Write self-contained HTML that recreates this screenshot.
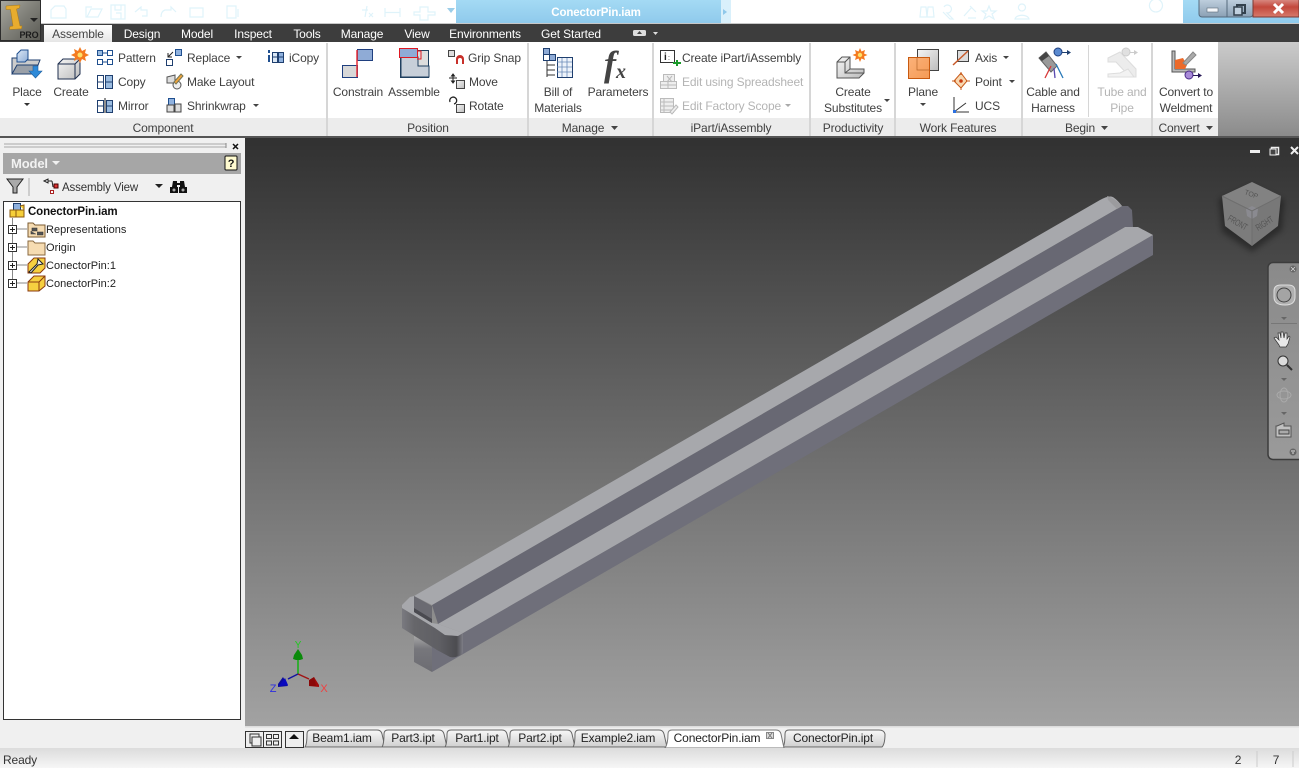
<!DOCTYPE html>
<html><head><meta charset="utf-8"><title>ConectorPin.iam</title>
<style>
html,body{margin:0;padding:0;width:1299px;height:768px;overflow:hidden;background:#f0f0f0}
svg{position:absolute;left:0;top:0;display:block}
text{font-family:"Liberation Sans",sans-serif;font-size:12px;fill:#444;letter-spacing:-.13px}
.m{text-anchor:middle}
.w{fill:#fff}
.g{fill:#404040}
.d{fill:#b4b4b4}
.k{fill:#222}
.tr{font-size:11px;fill:#222;letter-spacing:.02px}
</style></head><body>
<svg width="1299" height="768" viewBox="0 0 1299 768" xmlns="http://www.w3.org/2000/svg">
<defs>
<linearGradient id="vp" x1="0" y1="0" x2="0" y2="1"><stop offset="0" stop-color="#313131"/><stop offset="1" stop-color="#a2a2a2"/></linearGradient>
<linearGradient id="blue" x1="0" y1="0" x2="0" y2="1"><stop offset="0" stop-color="#a4daf4"/><stop offset="1" stop-color="#8fcaec"/></linearGradient>
<linearGradient id="app" x1="0" y1="0" x2="1" y2="1"><stop offset="0" stop-color="#a8a8a0"/><stop offset=".5" stop-color="#7f7f78"/><stop offset="1" stop-color="#5a5a54"/></linearGradient>
<linearGradient id="rgt" x1="0" y1="0" x2="0" y2="1"><stop offset="0" stop-color="#cbcbcb"/><stop offset="1" stop-color="#8b8b8b"/></linearGradient>
<linearGradient id="tab" x1="0" y1="0" x2="0" y2="1"><stop offset="0" stop-color="#f8f8f8"/><stop offset="1" stop-color="#cfcfcf"/></linearGradient>
<linearGradient id="asm" x1="0" y1="0" x2="0" y2="1"><stop offset="0" stop-color="#fff"/><stop offset="1" stop-color="#e4e4e4"/></linearGradient>
<linearGradient id="st" x1="0" y1="0" x2="0" y2="1"><stop offset="0" stop-color="#dcdcdc"/><stop offset="1" stop-color="#f6f6f6"/></linearGradient>
<linearGradient id="btn" x1="0" y1="0" x2="0" y2="1"><stop offset="0" stop-color="#c6d6e4"/><stop offset="1" stop-color="#8aa0b4"/></linearGradient>
<linearGradient id="red" x1="0" y1="0" x2="0" y2="1"><stop offset="0" stop-color="#e0a19a"/><stop offset=".5" stop-color="#c3483c"/><stop offset="1" stop-color="#d77a6c"/></linearGradient>
<linearGradient id="fl" x1="402" y1="0" x2="464" y2="0" gradientUnits="userSpaceOnUse"><stop offset="0" stop-color="#7a7a80"/><stop offset=".2" stop-color="#66666a"/><stop offset=".6" stop-color="#5f5f64"/><stop offset=".88" stop-color="#4c4c50"/><stop offset="1" stop-color="#85858f"/></linearGradient>
<linearGradient id="lo" x1="0" y1="636" x2="0" y2="672" gradientUnits="userSpaceOnUse"><stop offset="0" stop-color="#a8a8a8"/><stop offset=".35" stop-color="#77777c"/><stop offset="1" stop-color="#6c6c72"/></linearGradient>
<linearGradient id="nav" x1="0" y1="0" x2="0" y2="1"><stop offset="0" stop-color="#8a8a8a"/><stop offset="1" stop-color="#9a9a9a"/></linearGradient>
<linearGradient id="cb" x1="0" y1="0" x2="1" y2="1"><stop offset="0" stop-color="#dbe7f5"/><stop offset="1" stop-color="#8faed6"/></linearGradient>
<linearGradient id="gr" x1="0" y1="0" x2="1" y2="1"><stop offset="0" stop-color="#f5f5f5"/><stop offset="1" stop-color="#bcbcbc"/></linearGradient>
<linearGradient id="or" x1="0" y1="0" x2="1" y2="1"><stop offset="0" stop-color="#fbb27a"/><stop offset="1" stop-color="#f59a55"/></linearGradient>
<filter id="soft" x="-20%" y="-20%" width="140%" height="140%"><feGaussianBlur stdDeviation="3"/></filter>
</defs>

<!-- title bar -->
<rect width="1299" height="24" fill="#fff"/>
<rect x="456" y="0" width="265" height="23" fill="url(#blue)"/>
<rect x="721" y="0" width="10" height="23" fill="#d9f0fb"/>
<rect x="1183" y="0" width="116" height="24" fill="url(#blue)"/>
<text x="596" y="16" class="m w" style="font-weight:bold;font-size:11.500px">ConectorPin.iam</text>
<path d="M723 9l4 3-4 3z" fill="#8fc8ea"/>
<g fill="none" stroke="#dff3fa" stroke-width="1.200">
<path d="M51 18V10l4-4h9l2 3v9zM87 17l4-8h11l-4 8H86V7h6M111 5h14v14h-14zM115 5v5h6V5M116 13h5v6M135 12l6-5v3h6v6h-5M176 12l-5-5v3h-6c-3 1-4 4-4 7M190 8h13v9h-13zM227 6h9v12h-9zM238 9v8"/>
<path d="M367 6l-2 11M362 10h6M369 13l4 4M373 13l-4 4"/>
<path d="M385 8v9M385 12.500h15M400 8v9M420 7h8v5h7v3h-7v5h-8v-5h-6v-3h6z"/>
<path d="M921 7h5l1 10h-7zM928 7h5l1 10h-7zM944 7a4 4 0 1 1 3 6l6 6h-3l-7-7M970 6l6 6M964 16l8-9M968 18h8M989 6l2 5h5l-4 3 2 5-5-3-5 3 2-5-4-3h5zM1022 11a3.500 3.500 0 1 0-.1 0M1015 19c1-5 13-5 14 0zM1156 12a6.500 6.500 0 1 0-.1 0"/>
</g>
<path d="M447 8h8l-4 5z" fill="#9ccde8"/>
<!-- window buttons -->
<rect x="1199" y="-3" width="54" height="20" rx="3" fill="url(#btn)" stroke="#556a7c"/>
<path d="M1227 0v17" stroke="#556a7c"/>
<rect x="1253" y="-3" width="46" height="20" fill="url(#red)" stroke="#7a3a34"/>
<rect x="1207" y="8" width="11" height="4" fill="#f4f7fa" stroke="#5a6a78" stroke-width=".6"/>
<rect x="1237" y="5" width="8" height="8" fill="none" stroke="#33414d" stroke-width="2"/>
<rect x="1234" y="7" width="8" height="8" fill="#c0d0de" stroke="#33414d" stroke-width="1.500"/>
<path d="M1274 4l9 9M1283 4l-9 9" stroke="#fff" stroke-width="3"/>

<!-- tab bar -->
<rect y="23" width="1299" height="1" fill="#c8c8c8"/>
<rect y="24" width="1299" height="18" fill="#3d3d3d"/>
<rect x="44" y="25" width="68" height="18" fill="url(#asm)"/>
<text x="78" y="38" class="m">Assemble</text>
<text x="142" y="38" class="m w">Design</text>
<text x="197" y="38" class="m w">Model</text>
<text x="253" y="38" class="m w">Inspect</text>
<text x="307" y="38" class="m w">Tools</text>
<text x="362" y="38" class="m w">Manage</text>
<text x="417" y="38" class="m w">View</text>
<text x="485" y="38" class="m w">Environments</text>
<text x="571" y="38" class="m w">Get Started</text>
<rect x="633" y="30" width="13" height="6" rx="1.500" fill="#ddd"/><path d="M637 34l2.500-3 2.500 3z" fill="#444"/>
<path d="M653 32h5l-2.500 3z" fill="#ddd"/>

<!-- app button -->
<rect x=".5" y=".5" width="40" height="40" fill="url(#app)" stroke="#2c2c2c"/>
<path d="M6 6l14-1-.5 3-3 1L20 26l2-.2-.5 3L9.500 29.500l.5-3 3-.5L10.500 9.500 6 9.500z" fill="#e8ac2e" stroke="#a87a16" stroke-width=".5"/>
<path d="M30 18h8l-4 4z" fill="#222"/>
<text x="29" y="38" class="m" style="font-size:9px;font-weight:bold;fill:#1c1c1c">PRO</text>

<!-- ribbon -->
<rect y="42" width="1218" height="94" fill="#fff"/>
<rect x="1218" y="42" width="81" height="94" fill="url(#rgt)"/>
<rect y="118" width="1218" height="18" fill="#ececec"/>
<rect y="136" width="1299" height="2" fill="#555"/>
<g fill="#d6d6d6">
<rect x="326" y="43" width="2" height="93"/><rect x="527" y="43" width="2" height="93"/><rect x="652" y="43" width="2" height="93"/><rect x="809" y="43" width="2" height="93"/><rect x="894" y="43" width="2" height="93"/><rect x="1021" y="43" width="2" height="93"/><rect x="1151" y="43" width="2" height="93"/><rect x="1088" y="45" width="1" height="72"/>
</g>
<!-- ribbon labels -->
<text x="27" y="96" class="m g">Place</text><path d="M24 103h6l-3 3z" fill="#333"/>
<text x="71" y="96" class="m g">Create</text>
<text x="118" y="62" class="g">Pattern</text>
<text x="118" y="86" class="g">Copy</text>
<text x="118" y="110" class="g">Mirror</text>
<text x="187" y="62" class="g">Replace</text><path d="M236 56h6l-3 3z" fill="#444"/>
<text x="187" y="86" class="g">Make Layout</text>
<text x="187" y="110" class="g">Shrinkwrap</text><path d="M253 104h6l-3 3z" fill="#444"/>
<text x="289" y="62" class="g">iCopy</text>
<text x="163" y="132" class="m g">Component</text>
<text x="358" y="96" class="m g">Constrain</text>
<text x="414" y="96" class="m g">Assemble</text>
<text x="468" y="62" class="g">Grip Snap</text>
<text x="469" y="86" class="g">Move</text>
<text x="469" y="110" class="g">Rotate</text>
<text x="428" y="132" class="m g">Position</text>
<text x="558" y="96" class="m g">Bill of</text>
<text x="558" y="112" class="m g">Materials</text>
<text x="618" y="96" class="m g">Parameters</text>
<text x="583" y="132" class="m g">Manage</text><path d="M611 126h7l-3.500 4z" fill="#444"/>
<text x="682" y="62" class="g">Create iPart/iAssembly</text>
<text x="682" y="86" class="d">Edit using Spreadsheet</text>
<text x="682" y="110" class="d">Edit Factory Scope</text><path d="M785 104h6l-3 3z" fill="#aaa"/>
<text x="731" y="132" class="m g">iPart/iAssembly</text>
<text x="853" y="96" class="m g">Create</text>
<text x="853" y="112" class="m g">Substitutes</text><path d="M884 99h6l-3 3z" fill="#444"/>
<text x="853" y="132" class="m g">Productivity</text>
<text x="923" y="96" class="m g">Plane</text><path d="M920 103h6l-3 3z" fill="#444"/>
<text x="975" y="62" class="g">Axis</text><path d="M1003 56h6l-3 3z" fill="#444"/>
<text x="975" y="86" class="g">Point</text><path d="M1009 80h6l-3 3z" fill="#444"/>
<text x="975" y="110" class="g">UCS</text>
<text x="958" y="132" class="m g">Work Features</text>
<text x="1053" y="96" class="m g">Cable and</text>
<text x="1053" y="112" class="m g">Harness</text>
<text x="1122" y="96" class="m d">Tube and</text>
<text x="1122" y="112" class="m d">Pipe</text>
<text x="1080" y="132" class="m g">Begin</text><path d="M1101 126h7l-3.500 4z" fill="#444"/>
<text x="1186" y="96" class="m g">Convert to</text>
<text x="1186" y="112" class="m g">Weldment</text>
<text x="1179" y="132" class="m g">Convert</text><path d="M1206 126h7l-3.500 4z" fill="#444"/>

<!-- ribbon icons -->
<!-- Place -->
<path d="M12 73V58h6v-1h9v3h13l-2 5H22l-6 8z" fill="#ccc" stroke="#1f3f6f"/>
<path d="M12 74l5-9h21l-4 9z" fill="#9aa0a8" stroke="#1f3f6f"/>
<path d="M17 54l4-4h7v9l-3 3h-8z" fill="url(#cb)" stroke="#1f4f8f"/>
<path d="M33 66h5v5h4l-6.500 7-6.500-7h4z" fill="#2e8ad8" stroke="#1f5f9f" stroke-width=".6"/>
<!-- Create -->
<path d="M58 64l5-5h17v15l-5 5H58z" fill="url(#gr)" stroke="#1f2f4f"/>
<path d="M58 64h17v15M75 64l5-5" fill="none" stroke="#1f2f4f"/>
<path d="M80 47l2 4 4-2-1 4 4 2-4 2 1 4-4-2-2 4-2-4-4 2 1-4-4-2 4-2-1-4 4 2z" fill="#f47a20"/><circle cx="80" cy="55" r="2.500" fill="#ffe066"/>
<!-- Pattern -->
<g fill="#fff" stroke="#1f4f8f"><rect x="97.500" y="50.500" width="5" height="5" fill="#9bbce0"/><rect x="107.500" y="50.500" width="5" height="5"/><rect x="97.500" y="59.500" width="5" height="5"/><rect x="107.500" y="59.500" width="5" height="5"/></g>
<path d="M103 53h4M103 62h4" stroke="#1f4f8f"/>
<!-- Copy -->
<g fill="#fff" stroke="#1f3f6f"><rect x="97.500" y="75.500" width="6" height="13"/><rect x="105.500" y="75.500" width="7" height="13" fill="#9bbce0"/></g><path d="M97 82h6M105 82h7" stroke="#1f3f6f"/>
<!-- Mirror -->
<g fill="#fff" stroke="#1f3f6f"><rect x="97.500" y="100.500" width="6" height="12"/><rect x="106.500" y="100.500" width="6" height="12" fill="#9bbce0"/></g><path d="M97 106h6M106 106h6" stroke="#1f3f6f"/><path d="M105 98v15" stroke="#222"/>
<!-- Replace -->
<rect x="175.500" y="49.500" width="6" height="6" fill="#8fb1de" stroke="#1f4f8f"/><rect x="166.500" y="59.500" width="6" height="6" fill="#fff" stroke="#1f3f6f"/><path d="M168 57l5-5M168 53v4h4" fill="none" stroke="#222"/>
<!-- Make Layout -->
<path d="M167 77l8-2v8h-8z" fill="#ddd" stroke="#555"/><circle cx="177" cy="85" r="4" fill="#eee" stroke="#555"/><path d="M174 82l7-8 2 2-7 8z" fill="#f2a33a" stroke="#775"/>
<!-- Shrinkwrap -->
<rect x="168.500" y="98.500" width="6" height="7" fill="#8fb1de" stroke="#1f4f8f"/><path d="M167 105h7v7h-7zM175 104h6v8h-6z" fill="#ddd" stroke="#444"/>
<!-- iCopy -->
<path d="M269 50v3M269 55v7" stroke="#1f4f8f" stroke-width="2"/><rect x="272.500" y="52.500" width="5" height="10" fill="#dce8f5" stroke="#1f3f6f"/><rect x="278.500" y="52.500" width="5" height="10" fill="#8fb1de" stroke="#1f3f6f"/><path d="M272 57h11" stroke="#1f3f6f"/>
<!-- Constrain -->
<rect x="357.500" y="49.500" width="15" height="11" fill="#8fabd6" stroke="#1f3f7f"/>
<rect x="342.500" y="65.500" width="15" height="12" fill="#d8d8d8" stroke="#1f3f7f"/>
<path d="M357 50v27" stroke="#e8303a" stroke-width="1.500"/>
<!-- Assemble -->
<rect x="400.500" y="50.500" width="28" height="27" fill="#ddd" stroke="#1f3f5f"/>
<path d="M410 57h8v9h11v11h-28V57z" fill="#c7cfd9" stroke="#1f3f5f"/>
<rect x="399.500" y="48.500" width="18" height="9" fill="#8fabd6" stroke="#e01822"/><path d="M417 51h4v8h-4" fill="none" stroke="#e01822"/>
<!-- Grip snap -->
<rect x="448.500" y="50.500" width="6" height="6" fill="#ddd" stroke="#444"/><path d="M456 64v-5a4 4 0 0 1 8 0v5h-2v-4a2 2 0 0 0-4 0v4z" fill="#c8302a"/>
<!-- Move -->
<path d="M453 74v9M449 78h8M453 74l-1.500 2h3zM453 83l-1.500-2h3z" stroke="#222" fill="#222"/><rect x="456.500" y="80.500" width="8" height="8" fill="url(#gr)" stroke="#444"/>
<!-- Rotate -->
<path d="M450 102a3.500 3.500 0 1 1 4 2" fill="none" stroke="#222" stroke-width="1.300"/><rect x="456.500" y="104.500" width="8" height="8" fill="url(#gr)" stroke="#444"/>
<!-- BOM -->
<rect x="543.500" y="48.500" width="6" height="6" fill="#8fabd6" stroke="#1f3f6f"/><rect x="543.500" y="54.500" width="6" height="6" fill="#fff" stroke="#1f3f6f"/><rect x="549.500" y="54.500" width="6" height="6" fill="#8fabd6" stroke="#1f3f6f"/>
<rect x="557.500" y="57.500" width="15" height="20" fill="#eef3fa" stroke="#1f3f6f"/>
<path d="M557 62h15M557 67h15M557 72h15M562 58v19M567 58v19" stroke="#6a8ab8" stroke-width=".8"/>
<path d="M547 61v16M547 65h8M547 70h8M547 75h8" stroke="#333"/>
<!-- fx -->
<text x="604" y="76" style="font-family:'Liberation Serif',serif;font-style:italic;font-weight:bold;font-size:36px;fill:#444">f</text>
<text x="616" y="78" style="font-family:'Liberation Serif',serif;font-style:italic;font-weight:bold;font-size:20px;fill:#444">x</text>
<!-- iPart -->
<rect x="660.500" y="50.500" width="14" height="12" fill="#fff" stroke="#333"/><text x="664" y="60" style="font-size:10px;font-weight:bold;fill:#222">i</text><text x="668" y="60" style="font-size:7px;fill:#222">:</text><path d="M673 62h3v-2h2v2h3v2h-3v2h-2v-2h-3z" fill="#1a9a2a"/>
<g fill="#eee" stroke="#bbb"><rect x="663.500" y="74.500" width="11" height="9"/><rect x="660.500" y="81.500" width="16" height="7"/><path d="M667 76l5 6M672 76l-5 6M660 85h16M668 82v6" fill="none"/><rect x="660.500" y="98.500" width="13" height="14"/><path d="M660 102h13M660 106h13M660 110h13M664 98v15" fill="none"/><path d="M670 112l6-7 2 2-6 7z"/></g>
<!-- Substitutes -->
<path d="M837 62l5-5h8v12h14v4l-5 5h-22z" fill="url(#gr)" stroke="#555"/><path d="M837 62h8v11h19M845 62l5-5M845 73l5-4" fill="none" stroke="#555"/>
<path d="M860 48l1.500 3.500 3.500-1.500-1 3.500 3.500 1.500-3.500 1.500 1 3.500-3.500-1.500-1.500 3.500-1.500-3.500-3.500 1.500 1-3.500-3.500-1.500 3.500-1.500-1-3.500 3.500 1.500z" fill="#f47a20"/><circle cx="860" cy="55" r="2.200" fill="#ffe066"/>
<!-- Plane -->
<rect x="917.500" y="49.500" width="21" height="21" fill="url(#gr)" stroke="#444"/>
<rect x="908.500" y="57.500" width="21" height="21" fill="url(#or)" stroke="#c85a10"/>
<path d="M917 58v12h12" fill="none" stroke="#b5652a" stroke-width=".7"/>
<!-- Axis -->
<rect x="957.500" y="50.500" width="11" height="11" fill="#ddd" stroke="#444"/><path d="M953 65l15-14" stroke="#c85a2a" stroke-width="1.500"/>
<!-- Point -->
<path d="M961 73l6 8-6 7-7-7z" fill="#f8d8b0" stroke="#c85a1a"/><circle cx="961" cy="81" r="1.800" fill="#c83a10"/><path d="M961 72v3M961 87v3M952 81h4M966 81h4" stroke="#c85a1a"/>
<!-- UCS -->
<path d="M954 97v15h15M954 112l12-9" fill="none" stroke="#333"/><rect x="953" y="110" width="3" height="3" fill="#2a6fe0"/>
<!-- Cable -->
<path d="M1039 58l7-6 11 14-6 6z" fill="#9a9a9a" stroke="#666"/><path d="M1039 58l7-6 3 4-7 5z" fill="#444"/>
<path d="M1051 66l-6 12" stroke="#d83a3a" stroke-width="1.300" fill="none"/><path d="M1054 68l1 10" stroke="#5a4ab0" stroke-width="1.300"/><path d="M1056 64l7 14" stroke="#2a7ab8" stroke-width="1.300"/>
<circle cx="1058" cy="52" r="4" fill="#5a8ad0" stroke="#1f3f7f"/><path d="M1062 52h5v-2l4 2.500-4 2.500v-2h-5z" fill="#1f3f6f"/>
<!-- Tube -->
<path d="M1108 58l12-6 16 17v8h-6l-14-15h-8z" fill="#ececec" stroke="#ddd"/><path d="M1108 74l12-1 8-4 6 8h-26z" fill="#f2f2f2" stroke="#ddd"/>
<circle cx="1126" cy="52" r="4" fill="#e0e0e0" stroke="#ccc"/><path d="M1130 52h4v-2l4 2.500-4 2.500v-2h-4z" fill="#ccc"/>
<!-- Weldment -->
<path d="M1172 51h3v18h20v3h-23z" fill="#bbb" stroke="#555"/><path d="M1175 60l8-2 4 7-2 4h-10z" fill="#ec6a2a"/><path d="M1183 63l10-11 3 3-10 10z" fill="#aaa" stroke="#888"/>
<circle cx="1189" cy="75" r="4" fill="#a88ad8" stroke="#4a2a88"/><path d="M1193 75h5v-2l4 2.500-4 2.500v-2h-5z" fill="#2a1a58"/>

<!-- left panel -->
<rect y="138" width="245" height="610" fill="#f0f0f0"/>
<path d="M4 144h222M4 147h222" stroke="#a8a8a8"/><path d="M226 143v5" stroke="#888"/>
<path d="M233 144l5 5M238 144l-5 5" stroke="#111" stroke-width="1.500"/>
<rect x="3" y="153" width="238" height="21" fill="#a6a6a6"/>
<text x="11" y="168" style="font-size:13px;font-weight:bold;fill:#f2f2f2">Model</text><path d="M52 161h8l-4 4z" fill="#f0f0f0"/>
<rect x="225" y="156" width="12" height="14" rx="1" fill="#fffbd0" stroke="#111"/><text x="231" y="167" class="m" style="font-size:11px;font-weight:bold;fill:#111">?</text>
<path d="M7 179h16l-6 8v6h-4v-6z" fill="#aaa" stroke="#222"/>
<path d="M29 178v18" stroke="#aaa"/>
<path d="M44 181l4-2v4zM48 181h4M52 181l1 6" stroke="#222" fill="none"/><rect x="54" y="184" width="4" height="4" fill="#d33" stroke="#400"/><rect x="50.500" y="190.500" width="3" height="3" fill="#fff" stroke="#a22"/>
<text x="62" y="191" style="font-size:11.500px;fill:#333">Assembly View</text>
<path d="M155 184h8l-4 4z" fill="#222"/>
<path d="M172 187l1-6h4v6zM180 187v-6h4l1 6zM170 187h8v6h-8zM179 187h8v6h-8z" fill="#111"/><path d="M177 184h3" stroke="#111" stroke-width="2"/><circle cx="174" cy="190" r="1.500" fill="#aaa"/><circle cx="183" cy="190" r="1.500" fill="#aaa"/>
<rect x="3.500" y="201.500" width="237" height="518" fill="#fff" stroke="#333"/>
<!-- tree lines -->
<path d="M12.500 218v66M17 229h10M17 247h10M17 265h10M17 283h10" stroke="#888" fill="none"/>
<g fill="#fff" stroke="#333"><rect x="8.500" y="225.500" width="8" height="8"/><rect x="8.500" y="243.500" width="8" height="8"/><rect x="8.500" y="261.500" width="8" height="8"/><rect x="8.500" y="279.500" width="8" height="8"/></g>
<path d="M10 229.500h5M12.500 227v5M10 247.500h5M12.500 245v5M10 265.500h5M12.500 263v5M10 283.500h5M12.500 281v5" stroke="#222"/>
<!-- tree icons -->
<rect x="13.500" y="203.500" width="7" height="7" fill="#8fb1de" stroke="#1f3f6f"/><path d="M10 210h6v7h-6zM16 210h8v7h-8zM20 206l4-1v5" fill="#f5cf3a" stroke="#8a5a10"/>
<path d="M28 223h5l2 2h10v12H28z" fill="#f6dcb2" stroke="#7a5a30"/><path d="M32 228h5v3h-5zM37 232h6v3h-6M31 231v3h5" fill="#555" stroke="#333" stroke-width=".6"/>
<path d="M28 241h5l2 2h10v12H28z" fill="#f6dcb2" stroke="#8a6a40"/>
<path d="M28 264l6-6h11v10l-5 5H28z" fill="#f6d040" stroke="#8a3a10"/><path d="M29 272l8-8 1-5 5 5-5 1-7 8z" fill="#eee" stroke="#222"/>
<path d="M28 282l6-6h11v10l-6 5H28z" fill="#f6d040" stroke="#8a3a10"/><path d="M28 282h11v9M39 282l6-6" fill="none" stroke="#8a3a10"/>
<!-- tree text -->
<text x="28" y="215" style="font-size:11.500px;font-weight:bold;fill:#111">ConectorPin.iam</text>
<text x="46" y="233" class="tr">Representations</text>
<text x="46" y="251" class="tr">Origin</text>
<text x="46" y="269" class="tr">ConectorPin:1</text>
<text x="46" y="287" class="tr">ConectorPin:2</text>

<!-- viewport -->
<rect x="245" y="138" width="1054" height="588" fill="url(#vp)"/>

<!-- model -->
<!-- A side (dark groove) -->
<path d="M432 605L1122 206h6l4 4 1 17h-8L438 624z" fill="#686873"/>
<!-- B side + lower piece side -->
<polygon points="1153,235 1153,255 432,672 432,640 463,633" fill="#6f6f7a"/>
<!-- lower piece front -->
<polygon points="414,636 432,646 432,672 414,662" fill="url(#lo)"/>
<!-- B top -->
<polygon points="1125,227 1138,227 1153,235 463,633 438,624" fill="#a6a7ab"/>
<!-- A top -->
<path d="M414 596L1100 200q7-4 11-3.500q4 .5 11 9.500L432 605z" fill="#a7a8ac"/>
<path d="M1107 196q6 1 15 10l-5 3-9-9z" fill="#9b9b9e"/>
<!-- flange side -->
<path d="M402 608v20l35 22 13 7q5 1 8-1 5-1 5-4v-19l-5 3-13-1-10-7z" fill="url(#fl)"/>
<!-- flange top -->
<polygon points="414,596 410,597 402,605 402,608 435,628 445,635 458,636 463,633 438,624 432,623 414,612" fill="#a7a8ac"/>
<!-- A end -->
<polygon points="414,596 432,606 432,623 414,612" fill="#6b6b72"/>
<polygon points="414,608 432,619 432,623 414,612" fill="#4a4a50"/>

<!-- triad -->
<path d="M298 674v-18" stroke="#12b012" stroke-width="1.500"/>
<path d="M298 649l-4 6-1 4 3 1h4l3-1-1-4z" fill="#0a8a0a"/>
<text x="298" y="648" class="m" style="font-size:10px;fill:#1fc81f">Y</text>
<path d="M298 674l-10 5" stroke="#1414a0" stroke-width="1.500"/>
<path d="M283 677l-5 7v3l10-1z" fill="#0a0aa0"/><path d="M279 686l9-1-3-7z" fill="#0808c0"/>
<text x="273" y="692" class="m" style="font-size:11px;fill:#2e2ee0">Z</text>
<path d="M298 674l11 5" stroke="#a01414" stroke-width="1.500"/>
<path d="M314 677l5 8v2l-10-1z" fill="#a00a0a"/><path d="M309 686v-6l5-3 2 9z" fill="#8a0808"/>
<text x="324" y="692" class="m" style="font-size:11px;fill:#f04040">X</text>

<!-- viewcube -->
<polygon points="1219,199 1252,186 1284,200 1282,230 1252,252 1222,232" fill="#000" opacity=".35" filter="url(#soft)"/>
<polygon points="1252,182 1281,196 1252,211 1222,196" fill="#828282"/>
<polygon points="1222,196 1252,211 1252,246 1225,226" fill="#7c7c7c"/>
<polygon points="1281,196 1252,211 1252,246 1278,226" fill="#787878"/>
<polygon points="1252,206 1258,209 1257,216 1252,219 1247,216 1246,209" fill="#8a8a90"/>
<path d="M1222 196l30 15 29-15M1252 211v35" fill="none" stroke="#6e6e6e"/>
<text x="0" y="0" transform="translate(1244 194) rotate(20)" style="font-size:7px;fill:#555">TOP</text>
<text x="0" y="0" transform="translate(1227 220) rotate(30) scale(.9 1.300)" style="font-size:7px;fill:#555">FRONT</text>
<text x="0" y="0" transform="translate(1258 231) rotate(-32) scale(.9 1.300)" style="font-size:7px;fill:#555">RIGHT</text>

<!-- viewport window controls -->
<rect x="1250" y="150" width="10" height="3" fill="#eee"/>
<rect x="1271.500" y="147.500" width="7" height="7" fill="none" stroke="#eee" stroke-width="1.500"/><rect x="1270" y="149" width="6" height="6" fill="#444" stroke="#eee"/>
<path d="M1291 147l7 7M1298 147l-7 7" stroke="#eee" stroke-width="2"/>

<!-- nav bar -->
<rect x="1268" y="262.500" width="35" height="197" rx="5" fill="url(#nav)" stroke="#3c3c3c" stroke-width="1.500"/>
<circle cx="1293" cy="269" r="3.500" fill="#666"/><path d="M1291 267l4 4M1295 267l-4 4" stroke="#ddd" stroke-width=".7"/>
<path d="M1274 291q0-6 7-6h7q7 0 7 6v6q0 8-10 8-11 0-11-8z" fill="#b0b0b0" stroke="#ddd"/>
<circle cx="1284" cy="295" r="7" fill="#a4a4a4" stroke="#444"/>
<path d="M1281 317h6l-3 3z" fill="#666"/>
<path d="M1271 323.500h26" stroke="#777"/>
<path d="M1279 345l-5-7 2-1 3 3-1-7h2l1 5v-6h2l1 6 1-5h2v6l2-3 1 1-2 7-2 3h-6z" fill="#e8e8e8" stroke="#333" stroke-width=".7"/>
<circle cx="1283" cy="361" r="5" fill="#dcdcdc" stroke="#333"/><path d="M1287 365l5 5" stroke="#333" stroke-width="2"/>
<path d="M1281 378h6l-3 3z" fill="#666"/>
<ellipse cx="1284" cy="395" rx="7" ry="4" fill="none" stroke="#aaa"/><ellipse cx="1284" cy="395" rx="4" ry="7" fill="none" stroke="#aaa"/>
<path d="M1281 412h6l-3 3z" fill="#666"/>
<path d="M1277 426l7-3v3h7v11h-15v-11z" fill="#c0c0c0" stroke="#555"/><rect x="1279" y="430" width="10" height="4" fill="#aaa" stroke="#444"/>
<circle cx="1293" cy="452" r="3.500" fill="#666"/><path d="M1291 451h4M1292 453h2" stroke="#ddd"/>

<!-- doc tabs strip -->
<rect x="245" y="726" width="1054" height="22" fill="#f0f0f0"/>
<rect x="245" y="726" width="1054" height="1.500" fill="#ddd"/>
<rect x="245.500" y="731.500" width="18" height="16" fill="#eee" stroke="#333"/>
<rect x="250" y="734" width="9" height="9" fill="none" stroke="#333"/><rect x="252" y="737" width="9" height="9" fill="#eee" stroke="#333"/>
<rect x="263.500" y="731.500" width="18" height="16" fill="#eee" stroke="#333"/>
<g fill="none" stroke="#333"><rect x="266.500" y="734.500" width="5" height="4"/><rect x="273.500" y="734.500" width="5" height="4"/><rect x="266.500" y="741" width="5" height="4"/><rect x="273.500" y="741" width="5" height="4"/></g>
<rect x="285.500" y="731.500" width="18" height="16" fill="#eee" stroke="#333"/><path d="M289 739l5-5 5 5z" fill="#111"/>
<path d="M305 747q2-3 2-13 0-4 4-4h66q4 0 5 4l3 13z" fill="url(#tab)" stroke="#666"/>
<path d="M382 747q2-3 2-13 0-4 4-4h51q4 0 5 4l3 13z" fill="url(#tab)" stroke="#666"/>
<path d="M445 747q2-3 2-13 0-4 4-4h51q4 0 5 4l3 13z" fill="url(#tab)" stroke="#666"/>
<path d="M508 747q2-3 2-13 0-4 4-4h53q4 0 5 4l3 13z" fill="url(#tab)" stroke="#666"/>
<path d="M573 747q2-3 2-13 0-4 4-4h80q4 0 5 4l3 13z" fill="url(#tab)" stroke="#666"/>
<path d="M783 747q2-3 2-13 0-4 4-4h90q5 0 6 4 0 10-3 13z" fill="url(#tab)" stroke="#666"/>
<path d="M665 748q3-4 3-14 0-4 4-4h104q4 0 5 4l3 14z" fill="#fff" stroke="#777"/>
<text x="342" y="742" class="m k">Beam1.iam</text>
<text x="413" y="742" class="m k">Part3.ipt</text>
<text x="477" y="742" class="m k">Part1.ipt</text>
<text x="540" y="742" class="m k">Part2.ipt</text>
<text x="618" y="742" class="m k">Example2.iam</text>
<text x="717" y="742" class="m k">ConectorPin.iam</text>
<text x="833" y="742" class="m k">ConectorPin.ipt</text>
<rect x="766.500" y="732.500" width="7" height="6" fill="#ddd" stroke="#888"/><path d="M768 733l4 5M772 733l-4 5" stroke="#777"/>

<!-- status bar -->
<rect y="748" width="1299" height="20" fill="url(#st)"/>
<text x="3" y="764" class="k" style="fill:#333">Ready</text>
<text x="1238" y="764" class="m k" style="fill:#333">2</text>
<text x="1276" y="764" class="m k" style="fill:#333">7</text>
<path d="M1257 751v16M1293 751v16" stroke="#ccc"/>
</svg>
</body></html>
